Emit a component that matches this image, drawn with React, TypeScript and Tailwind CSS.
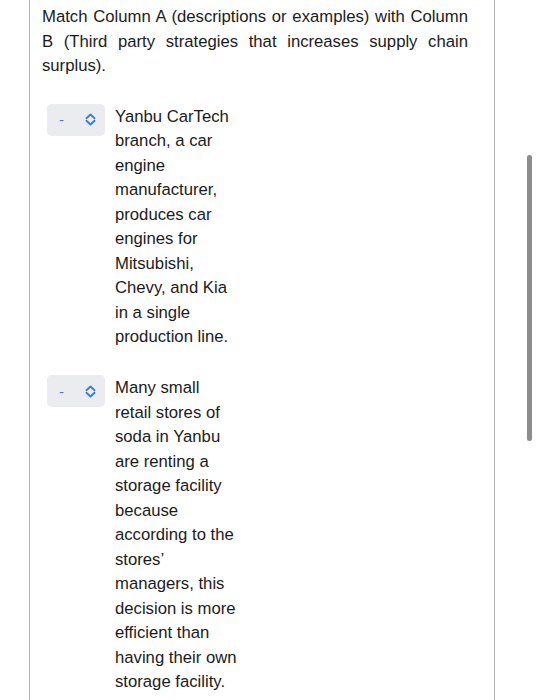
import type { ReactNode } from "react";

function UpDown() {
  return (
    <svg width="11" height="13" viewBox="0 0 11 13" fill="none" className="text-[#3a7fe0]">
      <path d="M1.5 5.2 L5.5 1.6 L9.5 5.2" stroke="currentColor" strokeWidth="2" strokeLinecap="round" strokeLinejoin="round" />
      <path d="M1.5 7.8 L5.5 11.4 L9.5 7.8" stroke="currentColor" strokeWidth="2" strokeLinecap="round" strokeLinejoin="round" />
    </svg>
  );
}

function MatchItem({ children }: { children: ReactNode }) {
  return (
    <div className="flex items-start">
      <div className="ml-[5px] mt-[-1px] flex h-[32px] w-[58px] shrink-0 items-center rounded-[5px] bg-[#eaecef] pl-[12px] pr-[9px]">
        <span className="flex-1 text-[15px] leading-none text-[#4f7dbd]">-</span>
        <UpDown />
      </div>
      <p className="ml-[10px] w-[123.5px] text-[16.7px] leading-[24.5px] text-[#1b1b1b]">{children}</p>
    </div>
  );
}

export default function App() {
  return (
    <div className="relative h-[700px] w-[536px] overflow-hidden bg-white font-['Liberation_Sans',Arial,sans-serif]">
      <div className="mx-[29px] h-full w-[466px] border-x-[1.5px] border-[#b4b4b4] pl-[12px] pr-[26px] pt-[5px]">
        <p className="text-justify text-[16.7px] leading-[24.5px] text-[#1b1b1b]">
          Match Column A (descriptions or examples) with Column B (Third party strategies that increases supply chain surplus).
        </p>
        <div className="mt-[26px] flex flex-col gap-[26.5px]">
          <MatchItem>
            Yanbu CarTech branch, a car engine manufacturer, produces car engines for Mitsubishi, Chevy, and Kia in a single production line.
          </MatchItem>
          <MatchItem>
            Many small retail stores of soda in Yanbu are renting a storage facility because according to the stores’ managers, this decision is more efficient than having their own storage facility.
          </MatchItem>
        </div>
      </div>
      {/* scrollbar */}
      <div className="absolute left-[527px] top-[155px] h-[286px] w-[5px] rounded-full bg-[#8c8c8c]" />
    </div>
  );
}
